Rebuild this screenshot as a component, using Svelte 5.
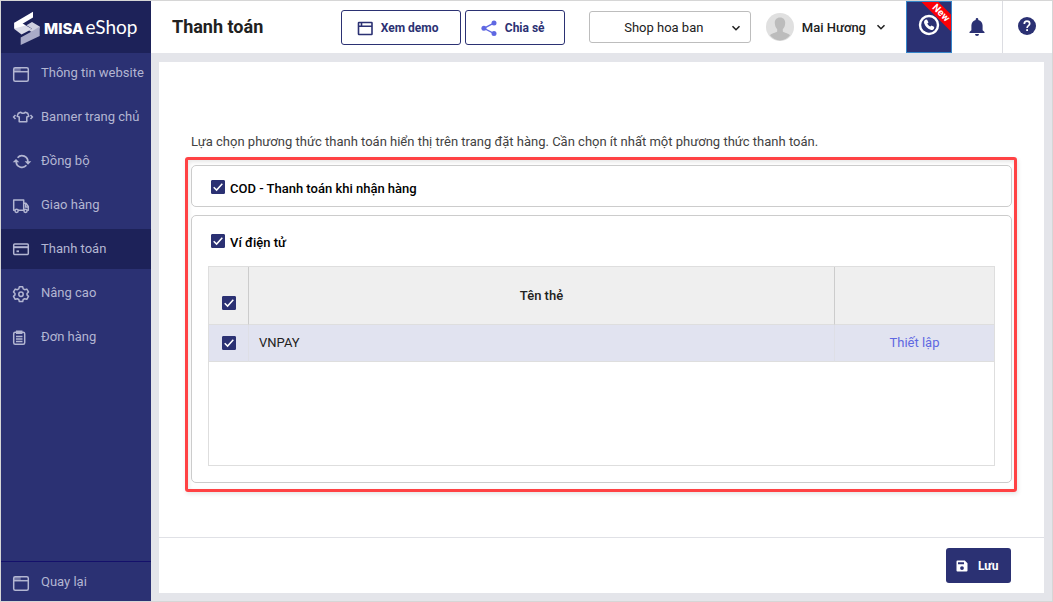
<script>
  const menu = [
    { icon: 'window', label: 'Thông tin website' },
    { icon: 'shirt', label: 'Banner trang chủ' },
    { icon: 'sync', label: 'Đồng bộ' },
    { icon: 'truck', label: 'Giao hàng' },
    { icon: 'card', label: 'Thanh toán', active: true },
    { icon: 'gear', label: 'Nâng cao' },
    { icon: 'clipboard', label: 'Đơn hàng' }
  ];
  let cod = $state(true);
  let wallet = $state(true);
  let cards = $state([{ name: 'VNPAY', checked: true }]);
  let all = $derived(cards.every((c) => c.checked));

  function toggleAll(event) {
    for (const card of cards) card.checked = event.currentTarget.checked;
  }
</script>

{#snippet menuIcon(name)}
  <svg class="menu-icon" width="20" height="20" viewBox="0 0 20 20" fill="none" stroke="currentColor" stroke-width="1.5" aria-hidden="true">
    {#if name === 'window'}
      <path d="M2.700 3.700h7v4h-7z" fill="currentColor" fill-opacity=".5" stroke="none" />
      <rect x="2.700" y="3.700" width="14.600" height="13.600" rx="1.500" />
      <path d="M2.700 7.700h14.600" />
    {:else if name === 'shirt'}
      <path d="M9.700 4.200 7.300 5.200 6.200 8.200l2 .8v4.700h7.600V9l2-.8-1.100-3-2.400-1c-.8 1.500-3.800 1.500-4.600 0z" stroke-linejoin="round" />
      <path d="M4.500 6.900 2.600 9l1.900 2.100M19.500 6.900l1.900 2.100-1.900 2.100" />
    {:else if name === 'sync'}
      <path d="M6.600 5.700A5.800 5.800 0 0 1 16.800 10M15.400 13.300A5.800 5.800 0 0 1 5.200 9.500" stroke-width="1.700" />
      <path d="M13.700 9.300h6.600l-3.300 3.400zM1.700 10.300h6.600L5 6.900z" fill="currentColor" stroke="none" />
    {:else if name === 'truck'}
      <path d="M4 14.300H2.700V4h10v10.300H7M12.700 7.200h2.200l2.400 3.200v3.900h-1.200" stroke-linejoin="round" />
      <circle cx="5.600" cy="14.800" r="1.600" /><circle cx="14.500" cy="14.800" r="1.600" />
      <path d="M14.700 8v2.900h2.500" />
    {:else if name === 'card'}
      <rect x="2.700" y="3.900" width="14.600" height="10.600" rx="1" />
      <path d="M2.700 7.200h14.600" stroke-width="2" /><path d="M5.500 11.300h2.500" stroke-width="1.800" />
    {:else if name === 'gear'}
      <path d="M8.300 2.800h3.400l.5 2.100 1.500.8 2.100-.6 1.700 2.900-1.500 1.500v1.400l1.500 1.500-1.700 2.900-2.100-.6-1.500.8-.5 2.100H8.300l-.5-2.100-1.500-.8-2.100.6-1.700-2.900L4 10.900V9.500L2.500 8l1.700-2.900 2.100.6 1.500-.8z" stroke-linejoin="round" />
      <circle cx="10" cy="10.200" r="2.200" />
    {:else if name === 'clipboard'}
      <rect x="2.700" y="4.200" width="11" height="12" rx="1.500" />
      <path d="M5.700 3.200h5v2h-5z" fill="currentColor" fill-opacity=".4" />
      <path d="M5 8.500h6.500M5 11h6.500M5 13.500h6.500" stroke-width="1.300" />
    {/if}
  </svg>
{/snippet}

{#snippet chevron()}
  <svg class="chevron" width="10" height="10" viewBox="0 0 10 10" fill="none" stroke="currentColor" stroke-width="1.600" aria-hidden="true">
    <path d="M1.500 3.300 5 6.700 8.500 3.300" />
  </svg>
{/snippet}

<div class="page">
  <aside class="sidebar">
    <a class="brand" href="#home">
      <svg width="26" height="34" viewBox="0 0 26 34" aria-hidden="true">
        <path d="M.3 11.700V18l7.200 5.500L18 18l-9.500-5.500z" fill="#dcdde9" />
        <path d="M19 .7v5.800L8.500 12.700l3 1.800L.3 17.500v-5.800z" fill="#fff" />
        <path d="m12.500 14.200 5.500-3.200 7.700 4.500v1.800L17.700 21 15 19.500l3-1.700z" fill="#cfd0e0" />
        <path d="M25.700 15.500V25l-19 9v-7.500l11-6z" fill="#a9abc8" />
      </svg>
      <span class="brand-name"><b>MISA</b><span>eShop</span></span>
    </a>
    <nav class="menu">
      {#each menu as item}
        <a class="item" class:active={item.active} href="#{item.icon}">
          {@render menuIcon(item.icon)}<span>{item.label}</span>
        </a>
      {/each}
    </nav>
    <a class="item back" href="#back">{@render menuIcon('window')}<span>Quay lại</span></a>
  </aside>

  <div class="content">
    <header class="topbar">
      <h1>Thanh toán</h1>
      <div class="actions">
        <button class="outline demo">
          <svg width="16" height="16" viewBox="0 0 16 16" fill="none" stroke="currentColor" stroke-width="1.600" aria-hidden="true">
            <rect x="1.500" y="2.500" width="13.500" height="12" rx=".5" /><path d="M1.500 6.200H15M4.500 2.500v3.700" />
          </svg>
          Xem demo
        </button>
        <button class="outline share">
          <svg width="16" height="16" viewBox="0 0 16 16" fill="#5f68e2" aria-hidden="true">
            <path d="M13.200 2.900 2.900 8.300l10.300 5.300" fill="none" stroke="#5f68e2" stroke-width="1.300" />
            <circle cx="13" cy="2.900" r="2.500" /><circle cx="2.900" cy="8.300" r="2.500" /><circle cx="13" cy="13.500" r="2.500" />
          </svg>
          Chia sẻ
        </button>
      </div>
      <div class="shop">
        <select aria-label="Shop hoa ban"><option>Shop hoa ban</option></select>
        {@render chevron()}
      </div>
      <button class="user">
        <svg width="28" height="28" viewBox="0 0 28 28" aria-hidden="true">
          <circle cx="14" cy="14" r="14" fill="#e0e0e0" />
          <path d="M14 4.500c3.500 0 5.300 2.400 5.200 5.500-.1 2.800-1 5-2.400 6.200v2.300c1 1.200 5.700 1.600 7.200 3.800A13 13 0 0 1 14 27.500a13 13 0 0 1-10-5.200c1.500-2.200 6.200-2.600 7.200-3.800v-2.300C9.800 15 8.900 12.800 8.800 10c-.1-3.100 1.700-5.500 5.200-5.500z" fill="#bcbcbc" />
        </svg>
        <span>Mai Hương</span>
        {@render chevron()}
      </button>
      <button class="call" aria-label="Hotline">
        <svg width="22" height="22" viewBox="0 0 22 22" aria-hidden="true">
          <circle cx="11" cy="11" r="9" fill="none" stroke="#fff" stroke-width="2.400" />
          <path d="M5.500 16.500 12 20.500H7.800z" fill="#fff" />
          <path d="M7.300 5.800 9 5.400l1.500 3-1.200 1.200c.6 1.400 1.600 2.400 3 3l1.300-1.100 2.700 1.600-.4 1.700c-.6 1.100-2 1.500-3.300 1-3.200-1.100-5.300-3.300-6.400-6.500-.4-1.300 0-2.800 1.100-3.500z" fill="#fff" />
        </svg>
        <span class="ribbon">New</span>
      </button>
      <button class="tool" aria-label="Thông báo">
        <svg width="16" height="18" viewBox="0 0 16 18" fill="currentColor" aria-hidden="true">
          <path d="M8 0c.8 0 1.300.6 1.300 1.300v.6c2.700.6 4.300 2.800 4.300 5.600v4.700L15.500 14v1H.5v-1l1.900-1.800V7.500c0-2.800 1.600-5 4.300-5.600v-.6C6.700.6 7.200 0 8 0zM6 16h4a2 2 0 0 1-4 0z" />
        </svg>
      </button>
      <button class="tool help" aria-label="Trợ giúp">
        <svg width="18" height="18" viewBox="0 0 18 18" aria-hidden="true">
          <circle cx="9" cy="9" r="9" fill="currentColor" />
          <path d="M6.300 6.900C6.300 5.200 7.500 4.200 9 4.200s2.700 1 2.700 2.500c0 1.900-2.600 2-2.600 4.200" fill="none" stroke="#fff" stroke-width="1.700" />
          <rect x="8.200" y="12.200" width="1.800" height="1.800" fill="#fff" />
        </svg>
      </button>
    </header>

    <main class="panel">
      <div class="body">
        <p>Lựa chọn phương thức thanh toán hiển thị trên trang đặt hàng. Cần chọn ít nhất một phương thức thanh toán.</p>
        <div class="highlight">
          <section class="box cod">
            <label><input type="checkbox" bind:checked={cod} />COD - Thanh toán khi nhận hàng</label>
          </section>
          <section class="box wallet">
            <label><input type="checkbox" bind:checked={wallet} />Ví điện tử</label>
            <div class="grid">
              <table>
                <thead>
                  <tr>
                    <th class="tick"><input type="checkbox" checked={all} onchange={toggleAll} aria-label="Tất cả" /></th>
                    <th>Tên thẻ</th>
                    <th class="setup"></th>
                  </tr>
                </thead>
                <tbody>
                  {#each cards as card}
                    <tr>
                      <td class="tick"><input type="checkbox" bind:checked={card.checked} aria-label={card.name} /></td>
                      <td>{card.name}</td>
                      <td class="setup"><a href="#setup">Thiết lập</a></td>
                    </tr>
                  {/each}
                </tbody>
              </table>
            </div>
          </section>
        </div>
      </div>
      <footer>
        <button class="save">
          <svg width="12" height="12" viewBox="0 0 12 12" aria-hidden="true">
            <path d="M1.500.5h7.300l2.700 2.700v7.300a1 1 0 0 1-1 1h-9a1 1 0 0 1-1-1v-9a1 1 0 0 1 1-1zM2 2.300v2h6v-2zM6 6.200A1.900 1.900 0 1 0 6 10a1.900 1.900 0 0 0 0-3.800z" fill="#fff" fill-rule="evenodd" />
          </svg>
          Lưu
        </button>
      </footer>
    </main>
  </div>
</div>

<style>
  :global(body) {
    margin: 0;
  }
  .page,
  .page * {
    box-sizing: border-box;
  }
  .page {
    display: flex;
    min-height: 100vh;
    border: 1px solid #d6d6d6;
    background: #e4e5ea;
    color: #212121;
    font: 13px/20px Roboto, "Liberation Sans", sans-serif;
  }
  button,
  select {
    font: inherit;
    color: inherit;
    cursor: pointer;
  }
  button {
    display: flex;
    align-items: center;
    padding: 0;
    border: 0;
    background: none;
    white-space: nowrap;
  }
  a {
    text-decoration: none;
  }
  svg {
    flex: none;
    display: block;
  }

  .sidebar {
    flex: none;
    display: flex;
    flex-direction: column;
    width: 150px;
    background: #2b3173;
  }
  .brand {
    display: flex;
    align-items: center;
    gap: 4px;
    height: 52px;
    padding: 2px 0 0 13px;
    background: #1d2259;
    color: #fff;
  }
  .brand-name {
    display: flex;
    align-items: baseline;
    gap: 2px;
    font: 400 19px/24px Lato, sans-serif;
  }
  .brand-name b {
    font: 800 15px/24px Inter, sans-serif;
  }
  .menu {
    flex: 1;
    display: flex;
    flex-direction: column;
    gap: 4px;
  }
  .item {
    display: flex;
    align-items: center;
    gap: 10px;
    height: 40px;
    padding-left: 10px;
    color: #b3b6d2;
    white-space: nowrap;
  }
  .menu-icon {
    margin-top: 2px;
    overflow: visible;
  }
  .item.active {
    background: #1d2259;
  }
  .back {
    border-top: 1px solid #14106b;
  }

  .content {
    flex: 1;
    display: flex;
    flex-direction: column;
    min-width: 0;
  }
  .topbar {
    display: flex;
    align-items: center;
    height: 52px;
    background: #fff;
  }
  h1 {
    flex: 1;
    margin: 0;
    padding-left: 21px;
    font-size: 18px;
    line-height: 24px;
    font-weight: 700;
    white-space: nowrap;
  }
  .actions {
    display: flex;
    gap: 4px;
    margin-right: 24px;
  }
  .outline {
    gap: 8px;
    height: 35px;
    padding: 1px 0 0 15px;
    border: 1px solid #2b3173;
    border-radius: 3px;
    background: #fff;
    color: #2b3173;
    font-size: 12px;
    font-weight: 700;
  }
  .demo {
    width: 120px;
  }
  .share {
    width: 100px;
  }
  .shop {
    position: relative;
    width: 162px;
    margin-right: 15px;
  }
  .shop select {
    display: block;
    width: 100%;
    height: 32px;
    padding: 2px 12px 0 0;
    border: 1px solid #bdbdbd;
    border-radius: 3px;
    appearance: none;
    background: #fff;
    text-align: center;
    text-align-last: center;
  }
  .shop :global(.chevron) {
    position: absolute;
    right: 10px;
    top: 12px;
    pointer-events: none;
  }
  .user {
    gap: 8px;
    margin-right: 20px;
    font-weight: 500;
  }
  .user span {
    padding-top: 2px;
  }
  .user :global(.chevron) {
    margin-left: 2px;
  }
  .call {
    position: relative;
    justify-content: center;
    width: 46px;
    height: 52px;
    padding-bottom: 4px;
    border: 1px solid #3585c9;
    background: #2b3173;
    overflow: hidden;
  }
  .ribbon {
    position: absolute;
    top: 5px;
    right: -20px;
    width: 60px;
    background: #fb0007;
    color: #fff;
    font-size: 10px;
    line-height: 12px;
    font-weight: 700;
    text-align: center;
    transform: rotate(45deg);
  }
  .tool {
    justify-content: center;
    width: 50px;
    height: 52px;
    color: #2b3173;
  }
  .help {
    padding: 0 2px 2px 0;
    border-left: 1px solid #dcdde2;
  }

  .panel {
    flex: 1;
    display: flex;
    flex-direction: column;
    margin: 9px 8px 8px;
    background: #fff;
  }
  .body {
    flex: 1;
    padding: 70px 27px 24px 26px;
  }
  p {
    margin: 0 0 5px;
    padding-left: 6px;
    color: #424242;
  }
  .highlight {
    display: flex;
    flex-direction: column;
    gap: 8px;
    padding: 5px 2px 6px 3px;
    border: 3px solid #ff4244;
    border-radius: 3px;
    box-shadow: 1px 2px 4px rgba(0, 0, 0, 0.1), inset 1px 2px 4px rgba(0, 0, 0, 0.1);
  }
  .box {
    border: 1px solid #ccc;
    border-radius: 5px;
    background: #fff;
    padding: 0 16px;
  }
  .cod {
    padding-top: 13px;
    height: 42px;
  }
  .wallet {
    padding-top: 17px;
    padding-bottom: 16px;
  }
  .box label {
    display: flex;
    gap: 5px;
    padding-left: 3px;
    color: #000;
    font-weight: 500;
  }
  input {
    appearance: none;
    flex: none;
    display: block;
    width: 14px;
    height: 14px;
    margin: 0;
    border: 1px solid #2b3173;
    border-radius: 1px;
    background: #fff;
  }
  label input {
    margin-top: 1px;
  }
  input:checked {
    background: #2b3173 url("data:image/svg+xml,%3Csvg xmlns='http://www.w3.org/2000/svg' viewBox='0 0 12 12'%3E%3Cpath d='M1.700 6.200l2.900 2.900 5.700-6.300' fill='none' stroke='white' stroke-width='1.500'/%3E%3C/svg%3E") center / 12px 12px no-repeat;
  }
  .grid {
    min-height: 200px;
    margin-top: 13px;
    border: 1px solid #dedede;
  }
  table {
    width: 100%;
    border-collapse: separate;
    border-spacing: 0;
    table-layout: fixed;
  }
  th {
    height: 58px;
    padding: 0 10px;
    background: #efefef;
    border-right: 1px solid #ccc;
    border-bottom: 1px solid #dedede;
    font-weight: 500;
  }
  td {
    height: 37px;
    padding: 0 10px;
    background: #e1e3f0;
    border-right: 1px solid #dedfe6;
    border-bottom: 1px solid #dedede;
  }
  .tick {
    width: 40px;
    padding: 0 0 0 13px;
  }
  th.tick {
    padding-top: 15px;
  }
  .setup {
    width: 159px;
    border-right: 0;
    text-align: center;
  }
  .setup a {
    color: #5f68e2;
  }
  footer {
    display: flex;
    justify-content: flex-end;
    padding: 10px 33px;
    border-top: 1px solid #e0e1e6;
  }
  .save {
    gap: 10px;
    width: 65px;
    height: 35px;
    padding-left: 10px;
    border-radius: 3px;
    background: #2b3173;
    color: #fff;
    font-size: 12px;
    font-weight: 700;
  }
</style>
